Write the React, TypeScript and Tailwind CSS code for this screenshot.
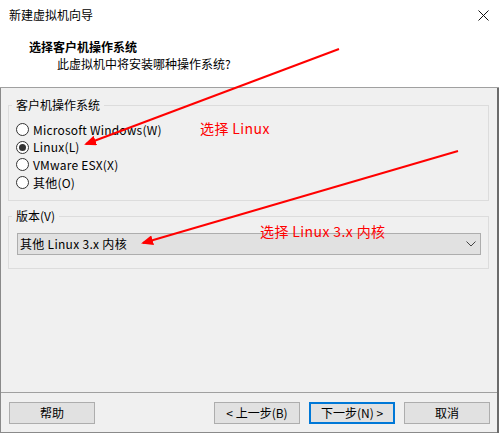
import React, { useState } from "react";

const ui = "font-['Noto_Sans_CJK_SC','Noto_Sans',sans-serif]";

const osList = [
  { id: "win", label: "Microsoft Windows(W)" },
  { id: "linux", label: "Linux(L)" },
  { id: "esx", label: "VMware ESX(X)" },
  { id: "other", label: "其他(O)" },
];

function Radio({ checked, label, onPick }: { checked: boolean; label: string; onPick: () => void }) {
  return (
    <div className="flex items-center h-[17.6px] gap-[4px] cursor-default" onMouseDown={onPick}>
      <span className="w-[13px] h-[13px] rounded-full border border-[#333333] bg-white flex items-center justify-center">
        {checked && <span className="w-[7px] h-[7px] rounded-full bg-[#333333]" />}
      </span>
      <span className="text-[12px] leading-4 text-black tracking-[0.2px]">{label}</span>
    </div>
  );
}

function Btn({ children, primary }: { children: React.ReactNode; primary?: boolean }) {
  return (
    <button
      className={
        primary
          ? "w-[86px] h-[22px] bg-[#e1e1e1] border-2 border-[#0078d7] text-[12px] leading-4 text-black"
          : "w-[86px] h-[22px] bg-[#e1e1e1] border border-[#adadad] text-[12px] leading-4 text-black"
      }
    >
      {children}
    </button>
  );
}

export default function App() {
  const [os, setOs] = useState("linux");

  return (
    <div className={`relative w-[499px] h-[433px] flex flex-col bg-[#f0f0f0] ${ui}`}>
      {/* header */}
      <div className="relative h-[88px] bg-white border-b border-[#a0a0a0]">
        <div className="pl-[9px] pt-[7px] text-[12px] leading-4 text-black">新建虚拟机向导</div>
        <svg className="absolute left-[478px] top-[10px]" width="11" height="11" viewBox="0 0 11 11">
          <path d="M0.5 0.5 L10.5 10.5 M10.5 0.5 L0.5 10.5" stroke="#111" strokeWidth="1" />
        </svg>
        <div className="pl-[29px] pt-[16px] text-[12px] leading-4 font-bold text-black">选择客户机操作系统</div>
        <div className="pl-[57px] pt-[1px] text-[12px] leading-4 text-black">此虚拟机中将安装哪种操作系统?</div>
      </div>

      {/* body */}
      <div className="flex-1 flex flex-col border-l border-r-2 border-l-[#8a8a8a] border-r-[#6b6b6b] pt-[9px]">
        <fieldset className="ml-[7px] w-[481px] border border-[#dcdcdc] pl-[3px] pb-[9px]">
          <legend className="px-[4px] text-[12px] leading-4 text-black">客户机操作系统</legend>
          <div className="pl-[4px] pt-[8px] flex flex-col">
            {osList.map((o) => (
              <Radio key={o.id} label={o.label} checked={os === o.id} onPick={() => setOs(o.id)} />
            ))}
          </div>
        </fieldset>

        <fieldset className="ml-[7px] mt-[7px] w-[481px] border border-[#dcdcdc] pl-[3px] pb-[13px]">
          <legend className="px-[4px] text-[12px] leading-4 text-black">版本(V)</legend>
          <div className="ml-[5px] mt-[9px] w-[464px] h-[22px] bg-[#e1e1e1] border border-[#adadad] flex items-center justify-between pl-[2px] pr-[4px]">
            <span className="text-[12px] leading-4 text-black tracking-[0.3px]">其他 Linux 3.x 内核</span>
            <svg width="10" height="6" viewBox="0 0 10 6">
              <path d="M0.5 0.5 L5 5 L9.5 0.5" fill="none" stroke="#444" strokeWidth="1" />
            </svg>
          </div>
        </fieldset>

        {/* footer */}
        <div className="mt-auto border-t border-[#a0a0a0] border-b border-b-[#8a8a8a] h-[41px] pt-[9px] pl-[8px] flex">
          <Btn>帮助</Btn>
          <div className="ml-[119px] flex gap-[9px]">
            <Btn>&lt; 上一步(B)</Btn>
            <Btn primary>下一步(N) &gt;</Btn>
            <Btn>取消</Btn>
          </div>
        </div>
      </div>

      {/* red annotations */}
      <span className="absolute left-[200px] top-[119px] text-[14px] leading-[18px] tracking-[0.4px] text-[#ff0000]">选择 Linux</span>
      <span className="absolute left-[260px] top-[222px] text-[14px] leading-[18px] tracking-[0.4px] text-[#ff0000]">选择 Linux 3.x 内核</span>
      <svg className="absolute left-0 top-0 pointer-events-none" width="499" height="433" viewBox="0 0 499 433">
        <defs>
          <marker id="head" markerWidth="6" markerHeight="5" refX="5" refY="2.5" orient="auto" markerUnits="strokeWidth">
            <path d="M0 0 L6 2.5 L0 5 Z" fill="#ff0000" />
          </marker>
        </defs>
        <line x1="339" y1="49" x2="86" y2="144" stroke="#ff0000" strokeWidth="2" markerEnd="url(#head)" />
        <line x1="458" y1="151" x2="143" y2="243" stroke="#ff0000" strokeWidth="2" markerEnd="url(#head)" />
      </svg>
    </div>
  );
}
